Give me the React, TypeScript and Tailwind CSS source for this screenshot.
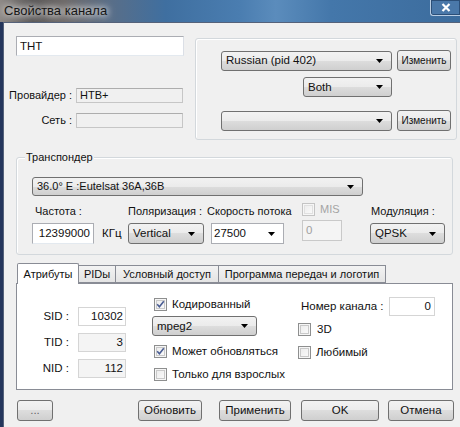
import React from 'react';

const grad = 'bg-[linear-gradient(#f2f2f2_0%,#ebebeb_50%,#dddddd_50%,#cfcfcf_100%)]';

function Arrow() {
  return (
    <svg width="7" height="4" viewBox="0 0 7 4" className="shrink-0">
      <polygon points="0,0 7,0 3.5,4" fill="#000" />
    </svg>
  );
}

function Combo({ text, className }: { text?: string; className: string }) {
  return (
    <div className={`flex items-center justify-between rounded-[3px] border border-[#707070] pl-[4px] pr-[8px] ${grad} ${className}`}>
      <span className="whitespace-nowrap">{text}</span>
      <Arrow />
    </div>
  );
}

function Btn({ text, className }: { text: string; className: string }) {
  return (
    <div className={`flex items-center justify-center rounded-[3px] border border-[#707070] ${grad} ${className}`}>
      {text}
    </div>
  );
}

function Check({ checked, disabled }: { checked?: boolean; disabled?: boolean }) {
  return (
    <svg width="13" height="13" viewBox="0 0 13 13" className="shrink-0">
      <defs>
        <linearGradient id="cbg" x1="0" y1="0" x2="1" y2="1">
          <stop offset="0" stopColor={disabled ? '#ececec' : '#d4d4d4'} />
          <stop offset="1" stopColor="#fafafa" />
        </linearGradient>
      </defs>
      <rect x="0.5" y="0.5" width="12" height="12" fill="#f6f6f6" stroke={disabled ? '#c4c4c4' : '#8e8f8f'} />
      <rect x="2.5" y="2.5" width="8" height="8" fill="url(#cbg)" stroke={disabled ? '#e0e0e0' : '#c9c9c9'} />
      {checked && <path d="M3.2 6.3 L5.4 8.7 L9.8 3.3" stroke="#4a5d93" strokeWidth="1.6" fill="none" />}
    </svg>
  );
}

function TitleBar() {
  return (
    <div className="flex h-[22px] shrink-0 items-start justify-between bg-[linear-gradient(90deg,#8e8986_0%,#5a5858_7%,#6e6a69_14%,#596e88_24%,#3f6fa0_36%,#4a7db0_52%,#5b8cbc_60%,#4477aa_72%,#3c6c9d_100%)]">
      <span className="pl-[4px] pt-[3px] text-[13px] leading-[16px] text-[#161616] [text-shadow:0_0_6px_#fff,0_0_10px_#fff]">
        Свойства канала
      </span>
      <div className="flex h-[16px] w-[30px] items-center justify-center rounded-bl-[3px] border-b border-l border-[#b9cde3] bg-[#4a78a9] shadow-[inset_0_0_0_1px_#2c4f78]">
        <svg width="10" height="9" viewBox="0 0 10 9">
          <path d="M1.5 1 L8.5 8 M8.5 1 L1.5 8" stroke="#fff" strokeWidth="2.2" />
        </svg>
      </div>
    </div>
  );
}

export default function App() {
  return (
    <div className="flex h-[427px] w-[460px] flex-col overflow-hidden font-['Liberation_Sans',Arial,sans-serif] text-[11px] leading-[13px] text-[#111]">
      <TitleBar />
      <div className="flex flex-1 border-l-[3px] border-[#24365c]">
        <div className="flex flex-1 flex-col border-l border-t border-[#55627a] bg-[#f0f0f0]">
          {/* top: name + audio */}
          <div className="flex h-[117px] items-start">
            <div className="mt-[13px] flex w-[180px] flex-col">
              <div className="ml-[12px] flex h-[20px] w-[168px] items-center border border-[#abadb3] border-b-[#e3e9ef] border-r-[#dbdfe6] bg-white pl-[3px] text-[11.5px]">
                ТНТ
              </div>
              <div className="mt-[32px] flex items-center">
                <span className="w-[68px] text-right">Провайдер :</span>
                <div className="ml-[4px] flex h-[15px] w-[107px] items-center border border-[#c6c6c6] border-t-[#adadad] pl-[3px]">НТВ+</div>
              </div>
              <div className="mt-[10px] flex items-center">
                <span className="w-[68px] text-right">Сеть :</span>
                <div className="ml-[4px] h-[15px] w-[107px] border border-[#c6c6c6] border-t-[#adadad]" />
              </div>
            </div>
            <div className="ml-[11px] mt-[15px] flex h-[102px] w-[262px] flex-col rounded-[3px] border border-[#d3d8dc] pl-[25px] pt-[11px] shadow-[inset_1px_1px_0_#fff]">
              <div className="flex items-center">
                <Combo text="Russian (pid 402)" className="h-[20px] w-[171px] text-[11.5px]" />
                <Btn text="Изменить" className="ml-[5px] h-[21px] w-[54px] text-[10px]" />
              </div>
              <Combo text="Both" className="ml-[82px] mt-[6px] h-[20px] w-[89px] text-[11.5px]" />
              <div className="mt-[13px] flex items-center">
                <Combo className="h-[20px] w-[171px]" />
                <Btn text="Изменить" className="ml-[5px] h-[21px] w-[54px] text-[10px]" />
              </div>
            </div>
          </div>

          {/* transponder */}
          <div className="relative ml-[12px] mt-[17px] h-[98px] w-[437px] rounded-[3px] border border-[#d3d8dc] pl-[15px] pt-[19px] shadow-[inset_1px_1px_0_#fff]">
            <span className="absolute -top-[7px] left-[8px] bg-[#f0f0f0] px-[1px]">Транспондер</span>
            <Combo text="36.0° E :Eutelsat 36A,36B" className="h-[19px] w-[331px]" />
            <div className="mt-[9px] flex">
              <div className="flex w-[96px] flex-col">
                <span className="pl-[3px]">Частота :</span>
                <div className="mt-[5px] flex items-center">
                  <div className="flex h-[21px] w-[62px] items-center justify-end border border-[#abadb3] border-b-[#e3e9ef] bg-white pr-[3px] text-[11.5px]">12399000</div>
                  <span className="ml-[8px] text-[11.5px]">КГц</span>
                </div>
              </div>
              <div className="flex w-[79px] flex-col">
                <span>Поляризация :</span>
                <Combo text="Vertical" className="mt-[5px] h-[21px] w-[76px] text-[11.5px]" />
              </div>
              <div className="flex w-[95px] flex-col">
                <span className="whitespace-nowrap">Скорость потока</span>
                <div className="ml-[4px] mt-[5px] flex h-[21px] w-[73px] items-center justify-between border border-[#abadb3] bg-white pl-[2px] pr-[8px] text-[11.5px]">
                  27500
                  <Arrow />
                </div>
              </div>
              <div className="flex w-[68px] flex-col">
                <div className="-mt-[2px] flex items-center">
                  <Check disabled />
                  <span className="ml-[5px] text-[#a4a4a4]">MIS</span>
                </div>
                <div className="mt-[4px] flex h-[21px] w-[40px] items-center border border-[#c9c9c9] bg-[#f4f4f4] pl-[3px] text-[11.5px] text-[#a0a0a0]">0</div>
              </div>
              <div className="flex flex-col">
                <span className="pl-[1px]">Модуляция :</span>
                <Combo text="QPSK" className="mt-[5px] h-[21px] w-[75px] text-[11.5px]" />
              </div>
            </div>
          </div>

          {/* tabs */}
          <div className="ml-[12px] mt-[8px] flex w-[437px] flex-col">
            <div className="flex items-end pl-[1px]">
              <div className="relative z-10 -mb-px flex h-[21px] w-[62px] items-center justify-center rounded-t-[2px] border border-b-0 border-[#898c95] bg-white">Атрибуты</div>
              <div className="flex h-[18px] w-[37px] items-center justify-center border border-l-0 border-[#898c95] bg-[linear-gradient(#f3f3f3,#e4e4e4)]">PIDы</div>
              <div className="flex h-[18px] w-[103px] items-center justify-center border border-l-0 border-[#898c95] bg-[linear-gradient(#f3f3f3,#e4e4e4)]">Условный доступ</div>
              <div className="flex h-[18px] w-[167px] items-center justify-center border border-l-0 border-[#898c95] bg-[linear-gradient(#f3f3f3,#e4e4e4)] whitespace-nowrap">Программа передач и логотип</div>
            </div>
            <div className="flex h-[107px] border border-[#898c95] bg-white text-[11.5px]">
              <div className="mt-[23px] flex flex-col gap-[7px]">
                {[
                  ['SID :', '10302', 'bg-white'],
                  ['TID :', '3', 'bg-[#f4f4f4]'],
                  ['NID :', '112', 'bg-[#f4f4f4]'],
                ].map(([l, v, bg]) => (
                  <div key={l} className="flex items-center">
                    <span className="w-[52px] text-right">{l}</span>
                    <div className={`ml-[9px] flex h-[19px] w-[48px] items-center justify-end border border-[#d5d5d5] pr-[2px] ${bg}`}>{v}</div>
                  </div>
                ))}
              </div>
              <div className="ml-[26px] flex w-[105px] flex-col">
                <div className="mt-[14px] flex items-center pl-[2px]">
                  <Check checked />
                  <span className="ml-[5px] whitespace-nowrap">Кодированный</span>
                </div>
                <Combo text="mpeg2" className="mt-[5px] h-[20px] w-[105px]" />
                <div className="mt-[9px] flex items-center pl-[2px]">
                  <Check checked />
                  <span className="ml-[5px] whitespace-nowrap">Может обновляться</span>
                </div>
                <div className="mt-[10px] flex items-center pl-[2px]">
                  <Check />
                  <span className="ml-[5px] whitespace-nowrap">Только для взрослых</span>
                </div>
              </div>
              <div className="ml-[41px] flex flex-col">
                <div className="mt-[13px] flex items-center">
                  <span className="w-[91px] pl-[3px]">Номер канала :</span>
                  <div className="flex h-[19px] w-[46px] items-center justify-end border border-[#d5d5d5] bg-white pr-[3px]">0</div>
                </div>
                <div className="mt-[7px] flex items-center">
                  <Check />
                  <span className="ml-[6px]">3D</span>
                </div>
                <div className="mt-[10px] flex items-center">
                  <Check />
                  <span className="ml-[5px]">Любимый</span>
                </div>
              </div>
            </div>
          </div>

          {/* buttons */}
          <div className="ml-[13px] mt-[10px] flex items-center text-[11.5px]">
            <Btn text="..." className="h-[21px] w-[36px] text-[#666]" />
            <Btn text="Обновить" className="ml-[85px] h-[21px] w-[64px]" />
            <Btn text="Применить" className="ml-[17px] h-[21px] w-[72px]" />
            <Btn text="OK" className="ml-[10px] h-[21px] w-[78px]" />
            <Btn text="Отмена" className="ml-[9px] h-[21px] w-[66px]" />
          </div>
        </div>
      </div>
    </div>
  );
}
